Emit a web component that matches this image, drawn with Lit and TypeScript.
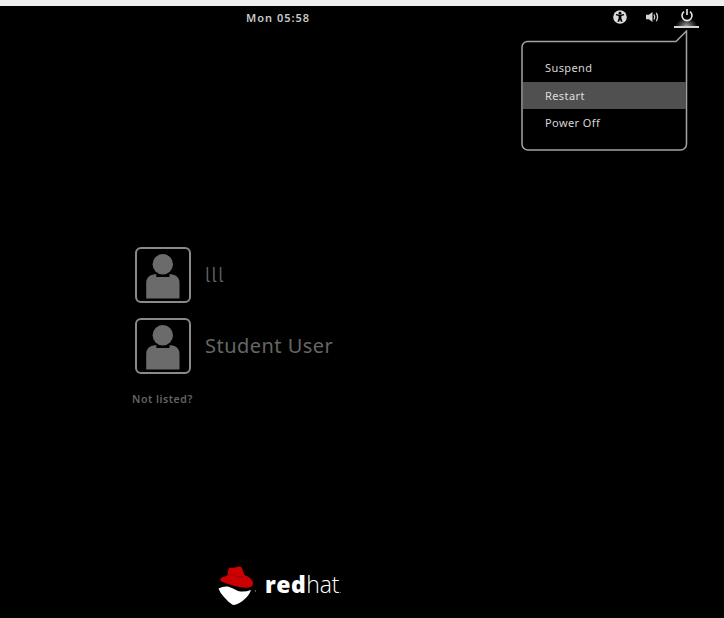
import { LitElement, html, css, svg } from "lit";
import { customElement } from "lit/decorators.js";

const avatar = svg`<svg class="person" width="34" height="45" viewBox="0 0 34 45">
  <circle cx="16.800" cy="10.200" r="10.200" fill="#6b6b6b"/>
  <path d="M.2 44.500V29Q.2 21.500 8.200 20.200H10.300V23H23.500V20.200H25.500Q33.500 21.500 33.500 29V44.500Z" fill="#6b6b6b"/>
</svg>`;

@customElement("app-root")
export class AppRoot extends LitElement {
  static styles = css`
    :host {
      display: block;
      width: 724px;
      height: 618px;
      background: #000;
      font-family: "Noto Sans", "Open Sans", sans-serif;
      overflow: hidden;
    }
    .screen { position: relative; width: 724px; height: 618px; display: flex; flex-direction: column; }
    .strip { height: 6px; background: #efefef; flex: none; }
    .panel {
      height: 22px; flex: none; display: grid;
      grid-template-columns: 1fr auto; position: relative;
    }
    .clock {
      position: absolute; left: 246px; top: 5px;
      font-size: 11px; font-weight: 600; line-height: 14px; letter-spacing: 1px; color: #c8c8c8;
    }
    .status { grid-column: 2; display: flex; align-items: flex-start; padding-right: 25px; }
    .status .icon { display: flex; justify-content: center; align-items: center; height: 22px; }
    .a11y { width: 14px; margin-right: 19px; margin-left: -1px; }
    .vol { width: 14px; margin-right: 14px; }
    .pow {
      width: 25px; height: 22px !important; box-sizing: border-box;
      border-bottom: 2px solid #d4d4d4;
      background: radial-gradient(ellipse 11px 8px at 50% 100%, rgba(255,255,255,.6), rgba(255,255,255,0));
      padding-bottom: 2px;
    }
    .menu {
      position: absolute; left: 521px; top: 30px; width: 167px; height: 121px;
    }
    .menu svg { position: absolute; inset: 0; }
    .items {
      position: absolute; left: 2px; right: 2px; top: 25px;
      display: flex; flex-direction: column;
    }
    .item {
      height: 27px; line-height: 27px; padding-left: 22px;
      font-size: 11px; letter-spacing: .4px; color: #d6d6d6;
    }
    .item:first-child { line-height: 26px; }
    .item.on { background: #505050; color: #dedede; }
    .users {
      flex: none; margin-top: 219px; padding-left: 135px;
      display: flex; flex-direction: column; gap: 15px;
    }
    .user { display: flex; align-items: center; gap: 14px; }
    .box {
      width: 56px; height: 56px; box-sizing: border-box;
      border: 2px solid #8a8a8a; border-radius: 6px;
      display: flex; justify-content: center; align-items: flex-end;
      padding-bottom: 2px;
    }
    .name { font-size: 20px; font-weight: 400; letter-spacing: .47px; color: #666; line-height: 24px; }
    .tail { font-family: Inter, "Noto Sans", sans-serif; font-weight: 300; font-feature-settings: "cv05" 1; letter-spacing: 1.4px; }
    .hint {
      margin: 3px 0 0 -3px; font-size: 10.500px; font-weight: 600; line-height: 14px;
      letter-spacing: .55px; color: #636363;
    }
    .logo {
      margin-top: auto; margin-bottom: 10px; padding-left: 214px;
      display: flex; align-items: flex-start; gap: 7px;
    }
    .word {
      font-size: 23px; line-height: 30px; color: #fff; margin-top: 7px;
      font-family: "Open Sans", "Noto Sans", sans-serif;
    }
    .word b { font-weight: 800; letter-spacing: .5px; }
    .word span { font-weight: 300; letter-spacing: -.2px; }
    .word i { font-style: normal; font-size: 8px; color: #aaa; }
  `;

  render() {
    return html`<div class="screen">
      <div class="strip"></div>
      <div class="panel">
        <div class="clock">Mon 05:58</div>
        <div class="status">
          <div class="icon a11y">
            <svg width="14" height="14" viewBox="0 0 14 14">
              <circle cx="7" cy="7" r="6.800" fill="#dcdcdc"/>
              <circle cx="7" cy="3.200" r="1.400" fill="#000"/>
              <path d="M2.800 5.200 5.600 6v2.200L4.400 11.800h1.800L7 9.500l.8 2.300h1.800L8.400 8.200V6l2.800-.8-.3-1.200L7 4.800 3.100 4Z" fill="#000"/>
            </svg>
          </div>
          <div class="icon vol">
            <svg width="14" height="12" viewBox="0 0 14 12">
              <path d="M0 3.800h2.800L6.500 1v10L2.800 8.200H0Z" fill="#d4d4d4"/>
              <path d="M8 3.500q1.500 2.500 0 5" fill="none" stroke="#d4d4d4" stroke-width="1.300"/>
              <path d="M10.300 1.800q2.500 4.200 0 8.400" fill="none" stroke="#d4d4d4" stroke-width="1.300"/>
            </svg>
          </div>
          <div class="icon pow">
            <svg width="14" height="14" viewBox="0 0 14 14">
              <path d="M4 3.600a5 5 0 1 0 6 0" fill="none" stroke="#e8e8e8" stroke-width="1.600"/>
              <path d="M7 1v6" stroke="#e8e8e8" stroke-width="1.600"/>
            </svg>
          </div>
        </div>
      </div>
      <div class="menu">
        <svg width="167" height="121" viewBox="0 0 167 121">
          <path d="M6 11.500H155L165.500 1V114a6 6 0 0 1-6 6H7a6 6 0 0 1-6-6V17.500a6 6 0 0 1 5-6Z" fill="#000" stroke="#a4a4a4" stroke-width="1.500"/>
        </svg>
        <div class="items">
          <div class="item">Suspend</div>
          <div class="item on">Restart</div>
          <div class="item">Power Off</div>
        </div>
      </div>
      <div class="users">
        <div class="user"><div class="box">${avatar}</div><div class="name tail">lll</div></div>
        <div class="user"><div class="box">${avatar}</div><div class="name">Student User</div></div>
        <div class="hint">Not listed?</div>
      </div>
      <div class="logo">
        <svg width="44" height="46" viewBox="0 0 44 46">
          <path d="M15.500 5.500Q20 6.500 24 4.500Q28 4 28.500 7.500L30.500 13Q36.500 15 39 20Q39.500 24.500 35 25.500Q29 26.500 21 24Q13 22 7.500 19.500Q5 17.500 7.500 15.500L13.500 13.500Q13.500 8 15.500 5.500Z" fill="#cc0000"/>
          <path d="M14.500 12Q22 16 29.500 15" fill="none" stroke="#a80005" stroke-width="1.200"/>
          <path d="M4.500 26.500Q9 24 14 24.500Q19 26 24 29Q30 30.500 37 28Q35 34 28.500 39Q23 43 19 43Q14 40 10 35Q6 31 4.500 26.500Z" fill="#fff"/>
          <circle cx="41.500" cy="29" r=".7" fill="#888"/>
        </svg>
        <div class="word"><b>red</b><span>hat</span><i>.</i></div>
      </div>
    </div>`;
  }
}
